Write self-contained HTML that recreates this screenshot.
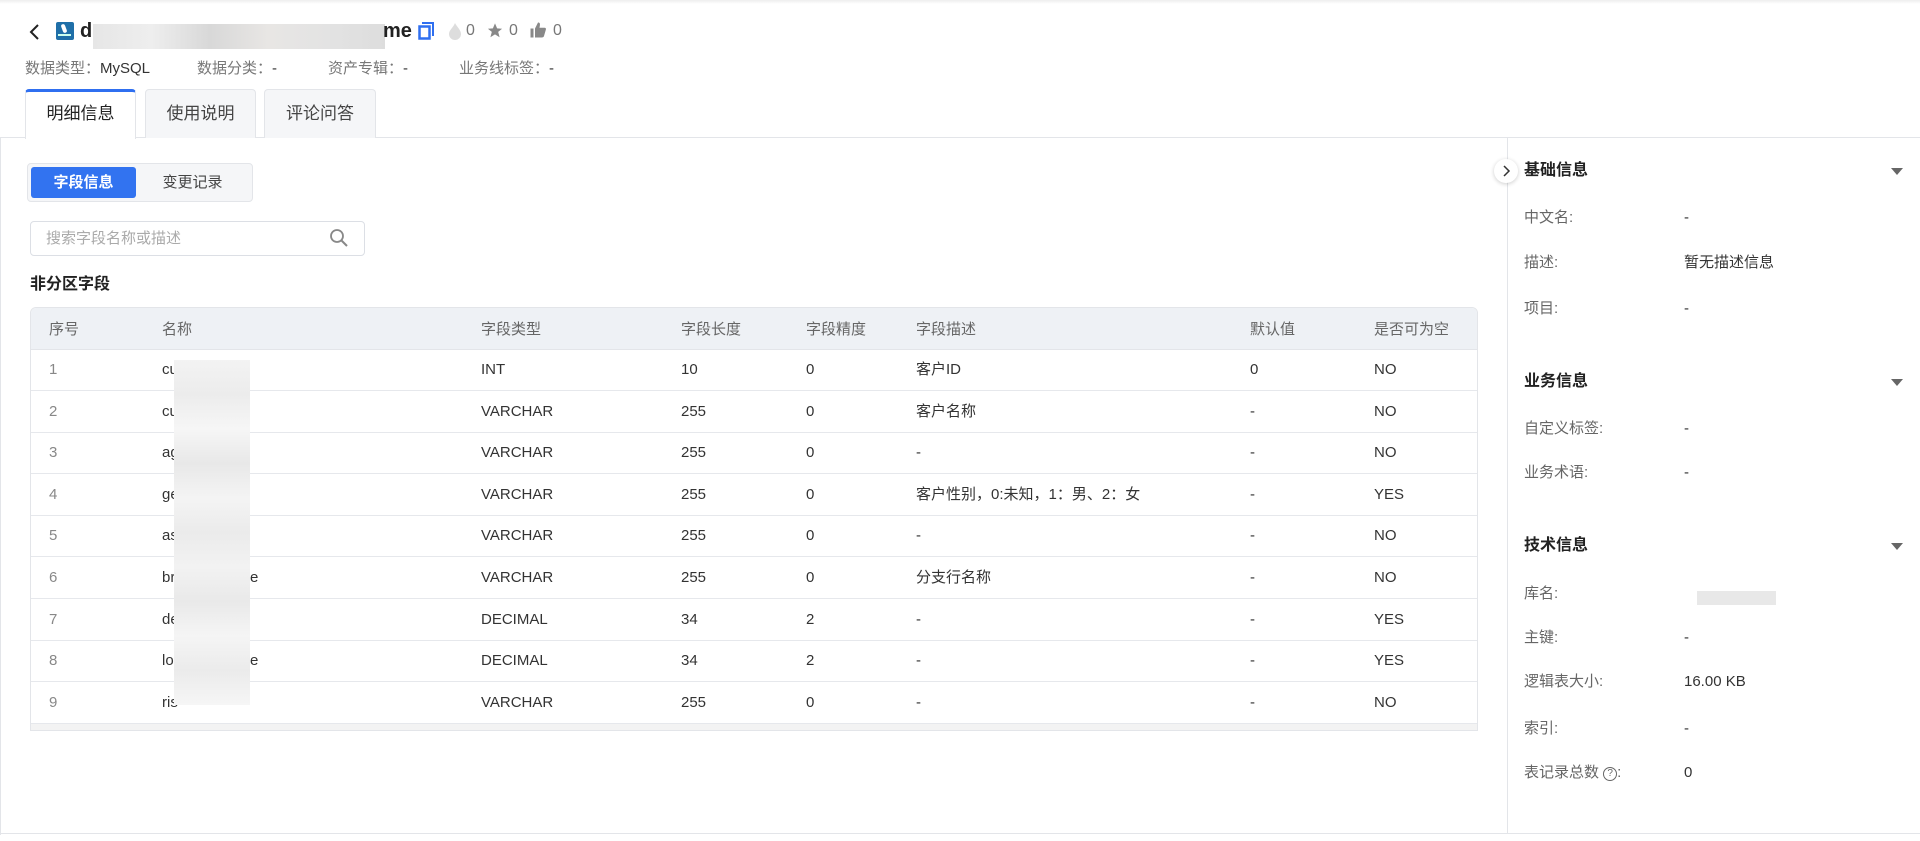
<!DOCTYPE html>
<html><head><meta charset="utf-8"><style>
*{box-sizing:border-box;margin:0;padding:0}
body{width:1920px;height:841px;background:#fff;font-family:"Liberation Sans","Noto Sans CJK SC",sans-serif;color:#222;position:relative;overflow:hidden}
.a{position:absolute;white-space:nowrap;line-height:22px}
.meta{font-size:15px;color:#777;top:58px}
.meta b{font-weight:normal;color:#333}
.tab{position:absolute;top:89px;height:49px;border:1px solid #e3e5e9;border-bottom:none;border-radius:4px 4px 0 0;background:#f5f6f8;font-size:17px;color:#444;text-align:center;line-height:48px}
.th{font-size:15px;color:#666;top:319px}
.td{font-size:15px;color:#333}
.rl{font-size:15px;color:#666;left:1524px}
.rv{font-size:15px;color:#333;left:1684px}
.rh{font-size:16px;font-weight:bold;color:#222;left:1524px}
.tri{position:absolute;left:1891px;width:0;height:0;border-left:6px solid transparent;border-right:6px solid transparent;border-top:7px solid #666}
</style></head><body>
<div class="a" style="left:0;top:0;width:1920px;height:4px;background:linear-gradient(#eee,#fff)"></div>
<svg class="a" style="left:28px;top:22px" width="14" height="20" viewBox="0 0 14 20"><path d="M10 3 L3 10 L10 17" fill="none" stroke="#222" stroke-width="2"/></svg>
<div class="a" style="left:56px;top:22px;width:18px;height:18px;background:#1f6fa8;border-radius:2px"><div style="position:absolute;left:6px;top:2px;width:4px;height:9px;background:#fff;transform:rotate(-20deg);border-radius:2px"></div><div style="position:absolute;left:2px;top:12px;width:13px;height:2px;background:#cfe"></div></div>
<div class="a" style="left:80px;top:20px;font-size:20px;font-weight:bold">d</div>
<div class="a" style="left:93px;top:24px;width:292px;height:25px;background:linear-gradient(90deg,#e6e6e6,#eee 20%,#d8d8d8 40%,#e8e6e4 60%,#e3e3e3 80%,#ddd)"></div>
<div class="a" style="left:383px;top:20px;font-size:20px;font-weight:bold">me</div>
<svg class="a" style="left:418px;top:22px" width="16" height="18" viewBox="0 0 16 18"><path d="M4 1 H15 V14" fill="none" stroke="#2f6ff0" stroke-width="2"/><rect x="1.5" y="4.5" width="10" height="12" fill="none" stroke="#2f6ff0" stroke-width="2.5"/></svg>
<svg class="a" style="left:448px;top:22px" width="14" height="18" viewBox="0 0 14 18"><path d="M7 1 C9 5 13 8 13 12 A6 6 0 0 1 1 12 C1 8 5 6 7 1Z" fill="#ddd"/></svg>
<div class="a" style="left:466px;top:20px;font-size:16px;color:#777">0</div>
<svg class="a" style="left:486px;top:22px" width="18" height="17" viewBox="0 0 24 24"><path d="M12 2 L15 9 L22 9.5 L16.5 14 L18.5 21.5 L12 17.5 L5.5 21.5 L7.5 14 L2 9.5 L9 9Z" fill="#888"/></svg>
<div class="a" style="left:509px;top:20px;font-size:16px;color:#777">0</div>
<svg class="a" style="left:529px;top:21px" width="18" height="18" viewBox="0 0 24 24"><path d="M2 10h4v12H2z M8 10 L12 2 C14 2 15 3 14.5 6 L14 9 H21 C22 9 23 10 22.5 11.5 L20 20 C19.5 21.5 18.5 22 17 22 H8Z" fill="#888"/></svg>
<div class="a" style="left:553px;top:20px;font-size:16px;color:#777">0</div>
<div class="a meta" style="left:25px">数据类型：<b>MySQL</b></div>
<div class="a meta" style="left:197px">数据分类：<b>-</b></div>
<div class="a meta" style="left:328px">资产专辑：<b>-</b></div>
<div class="a meta" style="left:459px">业务线标签：<b>-</b></div>
<div class="a" style="left:0;top:137px;width:1920px;height:1px;background:#e3e5e9"></div>
<div class="tab" style="left:25px;width:111px;background:#fff;border-top:3px solid #2f6ff0;line-height:44px;color:#222;height:50px">明细信息</div>
<div class="tab" style="left:145px;width:111px">使用说明</div>
<div class="tab" style="left:264px;width:112px">评论问答</div>
<div class="a" style="left:0;top:137px;width:1px;height:698px;background:#e3e5e9"></div>
<div class="a" style="left:0;top:833px;width:1920px;height:1px;background:#e3e5e9"></div>
<div class="a" style="left:1507px;top:137px;width:1px;height:697px;background:#e3e5e9"></div>
<div class="a" style="left:27px;top:163px;width:226px;height:39px;background:#f5f6f8;border:1px solid #e3e5e9;border-radius:4px"></div>
<div class="a" style="left:31px;top:167px;width:105px;height:31px;background:#3273f0;border-radius:3px;color:#fff;font-size:15px;font-weight:bold;text-align:center;line-height:31px">字段信息</div>
<div class="a" style="left:136px;top:167px;width:113px;height:31px;color:#444;font-size:15px;text-align:center;line-height:31px">变更记录</div>
<div class="a" style="left:30px;top:221px;width:335px;height:35px;border:1px solid #dcdfe5;border-radius:4px"></div>
<div class="a" style="left:46px;top:228px;font-size:15px;color:#aaa">搜索字段名称或描述</div>
<svg class="a" style="left:329px;top:228px" width="20" height="20" viewBox="0 0 20 20"><circle cx="8" cy="8" r="6" fill="none" stroke="#888" stroke-width="1.8"/><path d="M12.5 12.5 L18 18" stroke="#888" stroke-width="2"/></svg>
<div class="a" style="left:30px;top:274px;font-size:16px;font-weight:bold">非分区字段</div>
<div class="a" style="left:30px;top:307px;width:1448px;height:424px;border:1px solid #e3e5e9;border-radius:6px 6px 0 0;overflow:hidden">
<div style="position:absolute;left:0;top:0;width:100%;height:42px;background:#eef1f5;border-bottom:1px solid #e3e5e9"></div>
<div style="position:absolute;left:0;bottom:0;width:100%;height:7px;background:#f3f3f3"></div>
</div>
<div class="a th" style="left:49px">序号</div><div class="a th" style="left:162px">名称</div><div class="a th" style="left:481px">字段类型</div><div class="a th" style="left:681px">字段长度</div><div class="a th" style="left:806px">字段精度</div><div class="a th" style="left:916px">字段描述</div><div class="a th" style="left:1250px">默认值</div><div class="a th" style="left:1374px">是否可为空</div>
<div id="rows"></div>
<script>
var d=[["1","cu","INT","10","0","客户ID","0","NO"],["2","cu","VARCHAR","255","0","客户名称","-","NO"],["3","ag","VARCHAR","255","0","-","-","NO"],["4","ge","VARCHAR","255","0","客户性别，0:未知，1：男、2：女","-","YES"],["5","as","VARCHAR","255","0","-","-","NO"],["6","br","VARCHAR","255","0","分支行名称","-","NO"],["7","de","DECIMAL","34","2","-","-","YES"],["8","lo","DECIMAL","34","2","-","-","YES"],["9","ris","VARCHAR","255","0","-","-","NO"]];
var x=[49,162,481,681,806,916,1250,1374],h="";
d.forEach(function(r,i){var t=349+i*41.6;
h+='<div class="a" style="left:31px;top:'+(t+41)+'px;width:1446px;height:1px;background:#e6e8ec"></div>';
r.forEach(function(c,j){h+='<div class="a td" style="left:'+x[j]+'px;top:'+(t+10)+'px;'+(j==0?'color:#888':'')+'">'+c+'</div>'});
if(i==5||i==7)h+='<div class="a td" style="left:250px;top:'+(t+10)+'px">e</div>';});
h+='<div class="a" style="left:174px;top:360px;width:76px;height:345px;background:linear-gradient(#f3f3f3,#ececec 10%,#f6f6f6 20%,#e8e8e8 30%,#f4f4f4 40%,#ebebeb 50%,#f2f2f2 60%,#e9e9e9 70%,#f5f5f5 80%,#ebebeb 90%,#f6f6f6)"></div>';
document.getElementById("rows").innerHTML=h;
</script>
<div class="a" style="left:1494px;top:159px;width:24px;height:24px;border-radius:50%;background:#fff;box-shadow:0 1px 4px rgba(0,0,0,.2)"></div>
<svg class="a" style="left:1501px;top:165px" width="10" height="12" viewBox="0 0 10 12"><path d="M3 1 L8 6 L3 11" fill="none" stroke="#333" stroke-width="1.5"/></svg>
<div class="a rh" style="top:160px">基础信息</div><div class="tri" style="top:168px"></div>
<div class="a rl" style="top:207px">中文名:</div><div class="a rv" style="top:207px">-</div>
<div class="a rl" style="top:252px">描述:</div><div class="a rv" style="top:252px">暂无描述信息</div>
<div class="a rl" style="top:298px">项目:</div><div class="a rv" style="top:298px">-</div>
<div class="a rh" style="top:371px">业务信息</div><div class="tri" style="top:379px"></div>
<div class="a rl" style="top:418px">自定义标签:</div><div class="a rv" style="top:418px">-</div>
<div class="a rl" style="top:462px">业务术语:</div><div class="a rv" style="top:462px">-</div>
<div class="a rh" style="top:535px">技术信息</div><div class="tri" style="top:543px"></div>
<div class="a rl" style="top:583px">库名:</div><div class="a" style="left:1697px;top:591px;width:79px;height:14px;background:#e8e8e8"></div>
<div class="a rl" style="top:627px">主键:</div><div class="a rv" style="top:627px">-</div>
<div class="a rl" style="top:671px">逻辑表大小:</div><div class="a rv" style="top:671px">16.00 KB</div>
<div class="a rl" style="top:718px">索引:</div><div class="a rv" style="top:718px">-</div>
<div class="a rl" style="top:762px">表记录总数 <span style="display:inline-block;width:14px;height:14px;border:1.5px solid #666;border-radius:50%;font-size:10px;text-align:center;line-height:11px;vertical-align:1px">?</span>:</div><div class="a rv" style="top:762px">0</div>
</body></html>
